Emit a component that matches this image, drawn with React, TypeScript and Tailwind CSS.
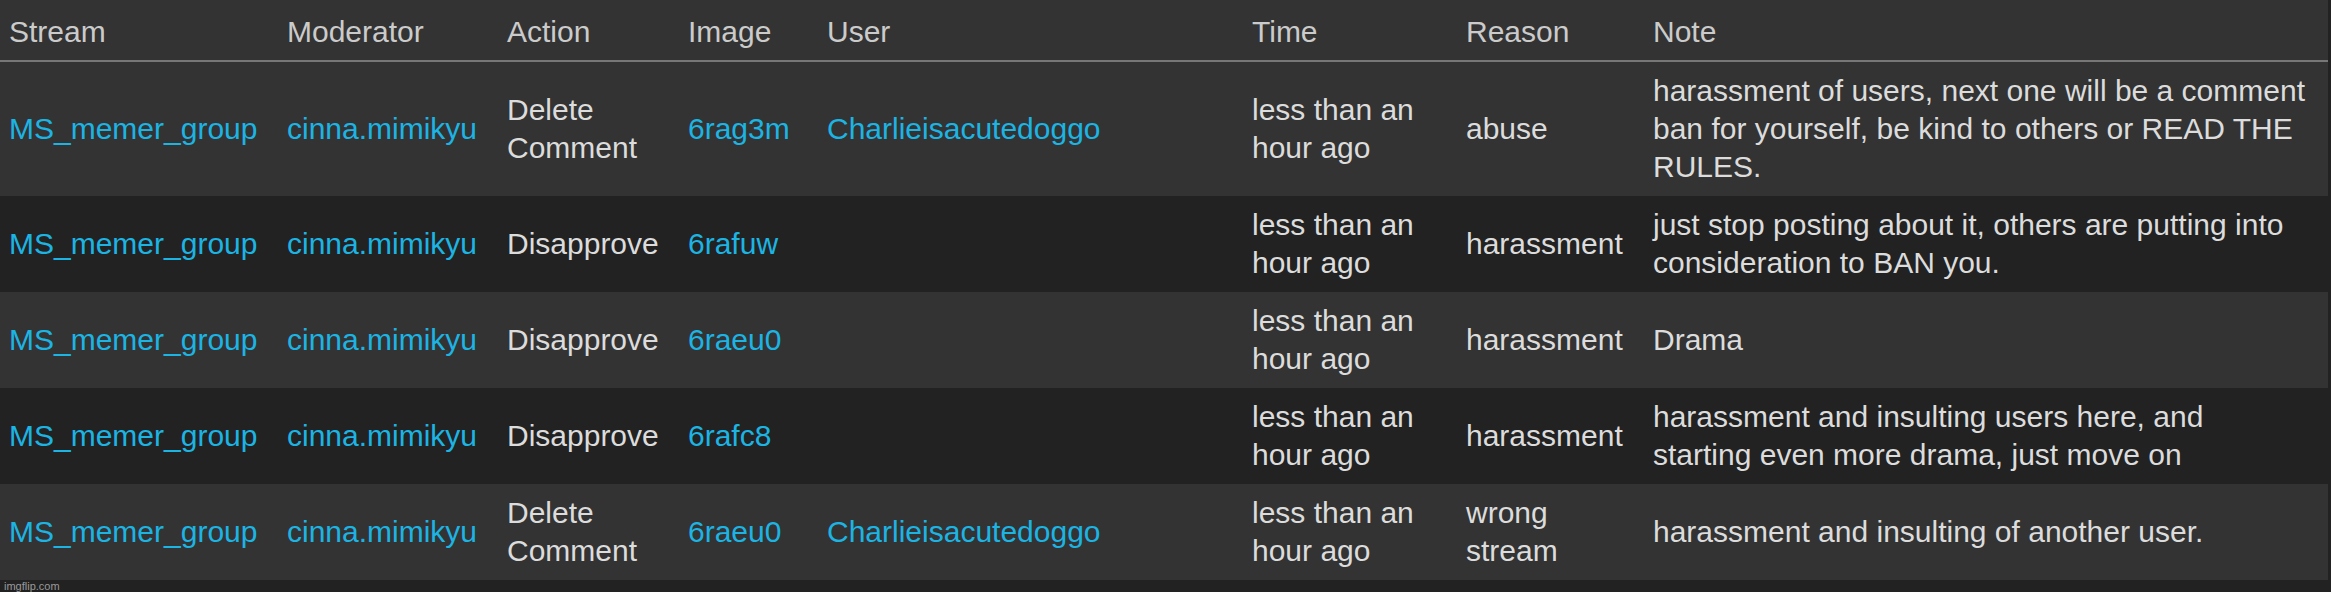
import React from "react";

type Cell = { text: string; link?: boolean };
type Row = Cell[];

const L = (text: string): Cell => ({ text, link: true });
const T = (text: string): Cell => ({ text });

const headers = ["Stream", "Moderator", "Action", "Image", "User", "Time", "Reason", "Note"];
const widths = ["w-[278px]", "w-[220px]", "w-[181px]", "w-[139px]", "w-[425px]", "w-[214px]", "w-[187px]", "w-[684px]"];

const rows: Row[] = [
  [
    L("MS_memer_group"),
    L("cinna.mimikyu"),
    T("Delete Comment"),
    L("6rag3m"),
    L("Charlieisacutedoggo"),
    T("less than an hour ago"),
    T("abuse"),
    T("harassment of users, next one will be a comment ban for yourself, be kind to others or READ THE RULES."),
  ],
  [
    L("MS_memer_group"),
    L("cinna.mimikyu"),
    T("Disapprove"),
    L("6rafuw"),
    T(""),
    T("less than an hour ago"),
    T("harassment"),
    T("just stop posting about it, others are putting into consideration to BAN you."),
  ],
  [
    L("MS_memer_group"),
    L("cinna.mimikyu"),
    T("Disapprove"),
    L("6raeu0"),
    T(""),
    T("less than an hour ago"),
    T("harassment"),
    T("Drama"),
  ],
  [
    L("MS_memer_group"),
    L("cinna.mimikyu"),
    T("Disapprove"),
    L("6rafc8"),
    T(""),
    T("less than an hour ago"),
    T("harassment"),
    T("harassment and insulting users here, and starting even more drama, just move on"),
  ],
  [
    L("MS_memer_group"),
    L("cinna.mimikyu"),
    T("Delete Comment"),
    L("6raeu0"),
    L("Charlieisacutedoggo"),
    T("less than an hour ago"),
    T("wrong stream"),
    T("harassment and insulting of another user."),
  ],
];

export default function App() {
  return (
    <div
      className="w-[2331px] h-[592px] bg-[#222222] overflow-hidden"
      style={{ fontFamily: '"Liberation Sans", Arial, Helvetica, sans-serif' }}
    >
      <table className="table-fixed border-collapse w-[2328px] text-[30px] leading-[38px]">
        <colgroup>
          {widths.map((w, i) => (
            <col key={i} className={w} />
          ))}
        </colgroup>
        <thead>
          <tr className="bg-[#333333] border-b-2 border-[#777777]">
            {headers.map((h) => (
              <th
                key={h}
                className="text-left font-normal text-[#cbcbcb] pl-[9px] pr-[9px] pt-[13px] pb-[9px] align-middle"
              >
                {h}
              </th>
            ))}
          </tr>
        </thead>
        <tbody>
          {rows.map((r, ri) => (
            <tr key={ri} className={ri % 2 === 0 ? "bg-[#333333]" : "bg-[#222222]"}>
              {r.map((c, ci) => (
                <td
                  key={ci}
                  className={
                    "align-middle pl-[9px] py-[10px] " +
                    (ci === 7 ? "pr-[21px] " : "pr-[9px] ") +
                    (c.link ? "text-[#1cb4e3]" : "text-[#dcdcdc]")
                  }
                >
                  {c.text}
                </td>
              ))}
            </tr>
          ))}
        </tbody>
      </table>
      <div className="h-[12px] pl-[4px] text-[11px] leading-[12px] text-[#9a9a9a]">imgflip.com</div>
    </div>
  );
}
